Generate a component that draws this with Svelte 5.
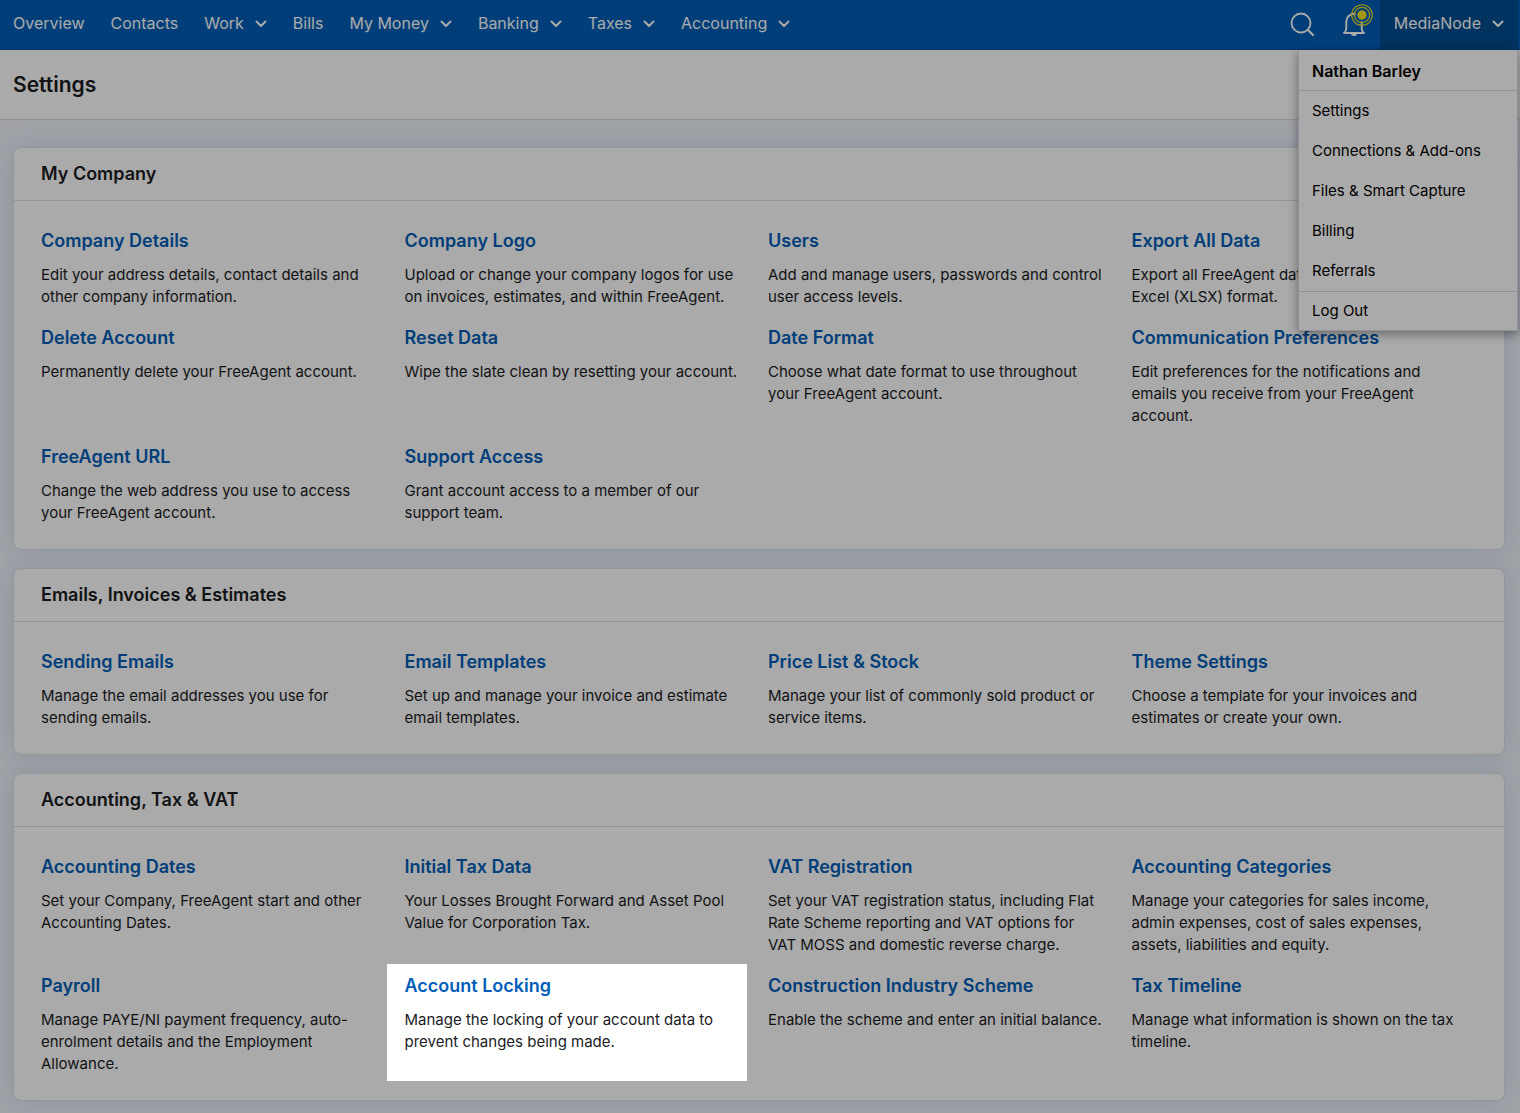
<script lang="ts">
	interface NavItem {
		label: string;
		menu?: boolean;
	}

	interface Setting {
		title: string;
		text: string;
		spotlight?: boolean;
	}

	interface Section {
		heading: string;
		items: Setting[];
	}

	const navItems: NavItem[] = [
		{ label: 'Overview' },
		{ label: 'Contacts' },
		{ label: 'Work', menu: true },
		{ label: 'Bills' },
		{ label: 'My Money', menu: true },
		{ label: 'Banking', menu: true },
		{ label: 'Taxes', menu: true },
		{ label: 'Accounting', menu: true }
	];

	const menuLinks = [
		'Settings',
		'Connections & Add-ons',
		'Files & Smart Capture',
		'Billing',
		'Referrals'
	];

	const sections: Section[] = [
		{
			heading: 'My Company',
			items: [
				{
					title: 'Company Details',
					text: 'Edit your address details, contact details and other company information.'
				},
				{
					title: 'Company Logo',
					text: 'Upload or change your company logos for use on invoices, estimates, and within FreeAgent.'
				},
				{
					title: 'Users',
					text: 'Add and manage users, passwords and control user access levels.'
				},
				{
					title: 'Export All Data',
					text: 'Export all FreeAgent data in\nExcel (XLSX) format.'
				},
				{ title: 'Delete Account', text: 'Permanently delete your FreeAgent account.' },
				{ title: 'Reset Data', text: 'Wipe the slate clean by resetting your account.' },
				{
					title: 'Date Format',
					text: 'Choose what date format to use throughout your FreeAgent account.'
				},
				{
					title: 'Communication Preferences',
					text: 'Edit preferences for the notifications and emails you receive from your FreeAgent account.'
				},
				{
					title: 'FreeAgent URL',
					text: 'Change the web address you use to access your FreeAgent account.'
				},
				{
					title: 'Support Access',
					text: 'Grant account access to a member of our support team.'
				}
			]
		},
		{
			heading: 'Emails, Invoices & Estimates',
			items: [
				{
					title: 'Sending Emails',
					text: 'Manage the email addresses you use for sending emails.'
				},
				{
					title: 'Email Templates',
					text: 'Set up and manage your invoice and estimate email templates.'
				},
				{
					title: 'Price List & Stock',
					text: 'Manage your list of commonly sold product or service items.'
				},
				{
					title: 'Theme Settings',
					text: 'Choose a template for your invoices and estimates or create your own.'
				}
			]
		},
		{
			heading: 'Accounting, Tax & VAT',
			items: [
				{
					title: 'Accounting Dates',
					text: 'Set your Company, FreeAgent start and other Accounting Dates.'
				},
				{
					title: 'Initial Tax Data',
					text: 'Your Losses Brought Forward and Asset Pool Value for Corporation Tax.'
				},
				{
					title: 'VAT Registration',
					text: 'Set your VAT registration status, including Flat Rate Scheme reporting and VAT options for VAT MOSS and domestic reverse charge.'
				},
				{
					title: 'Accounting Categories',
					text: 'Manage your categories for sales income, admin expenses, cost of sales expenses, assets, liabilities and equity.'
				},
				{
					title: 'Payroll',
					text: 'Manage PAYE/NI payment frequency, auto-enrolment details and the Employment Allowance.'
				},
				{
					title: 'Account Locking',
					text: 'Manage the locking of your account data to prevent changes being made.',
					spotlight: true
				},
				{
					title: 'Construction Industry Scheme',
					text: 'Enable the scheme and enter an initial balance.'
				},
				{
					title: 'Tax Timeline',
					text: 'Manage what information is shown on the tax timeline.'
				}
			]
		}
	];

	let menuOpen = $state(true);
</script>

{#snippet chevron()}
	<svg class="chevron" width="12" height="8" viewBox="0 0 12 8" fill="none" aria-hidden="true">
		<path
			d="M1.5 1.5 6 6l4.5-4.5"
			stroke="currentColor"
			stroke-width="2"
			stroke-linecap="round"
			stroke-linejoin="round"
		/>
	</svg>
{/snippet}

<header class="topbar">
	<nav aria-label="Main">
		{#each navItems as item}
			{#if item.menu}
				<button type="button" class="nav-item">{item.label}{@render chevron()}</button>
			{:else}
				<a class="nav-item" href="#top">{item.label}</a>
			{/if}
		{/each}
	</nav>

	<div class="tools">
		<button type="button" class="icon-btn" aria-label="Search">
			<svg width="26" height="26" viewBox="0 0 26 26" fill="none" stroke="currentColor">
				<circle cx="12" cy="12" r="9.5" stroke-width="1.8" />
				<path d="m19 19 5 5" stroke-width="2.2" stroke-linecap="round" />
			</svg>
		</button>
		<button type="button" class="icon-btn" aria-label="Notifications">
			<svg width="26" height="26" viewBox="0 0 26 26" fill="none" stroke="currentColor">
				<path
					d="M3 22h20c-1.6-1.200-2.300-2.400-2.300-4.500v-7a7.500 7.500 0 0 0-15.400 0v7c0 2.100-.7 3.300-2.300 4.500Z"
					stroke-width="1.9"
					stroke-linejoin="round"
				/>
				<path d="M10 22.500a3 2.500 0 0 0 6 0Z" fill="currentColor" stroke="none" />
			</svg>
			<svg class="pulse" width="22" height="22" viewBox="0 0 22 22" fill="none" stroke="#f2e21c">
				<circle cx="11" cy="11" r="6.500" fill="#005eb8" stroke="none" />
				<circle cx="11" cy="11" r="10.3" stroke-width="1.1" />
				<circle cx="11" cy="11" r="7.7" stroke-width="1.2" />
				<circle cx="11" cy="11" r="4.7" fill="#f2e21c" stroke="none" />
			</svg>
		</button>
		<div class="account">
			<button
				type="button"
				class="account-btn"
				aria-expanded={menuOpen}
				onclick={() => (menuOpen = !menuOpen)}
			>
				MediaNode{@render chevron()}
			</button>
			{#if menuOpen}
				<div class="menu">
					<strong>Nathan Barley</strong>
					<ul>
						{#each menuLinks as link}
							<li><a href="#top">{link}</a></li>
						{/each}
					</ul>
					<a href="#top">Log Out</a>
				</div>
			{/if}
		</div>
	</div>
</header>

<div class="title-bar">
	<h1>Settings</h1>
</div>

<main>
	{#each sections as section}
		<section>
			<h2>{section.heading}</h2>
			<div class="grid">
				{#each section.items as item}
					<article class:spotlight={item.spotlight}>
						<h3><a href="#top">{item.title}</a></h3>
						<p>{item.text}</p>
					</article>
				{/each}
			</div>
		</section>
	{/each}
</main>

<style>
	:global(body) {
		min-height: 100vh;
		margin: 0;
		background: #f0f4fb;
		color: #1a1c1e;
		font-family: Inter, 'Liberation Sans', sans-serif;
		font-size: 15px;
		line-height: 22px;
	}

	a {
		color: inherit;
		text-decoration: none;
	}

	button {
		margin: 0;
		border: 0;
		padding: 0;
		background: none;
		color: inherit;
		font: inherit;
		cursor: pointer;
	}

	h1,
	h2,
	h3,
	p,
	ul {
		margin: 0;
		padding: 0;
	}

	.topbar {
		display: flex;
		justify-content: space-between;
		height: 50px;
		padding-right: 2px;
		box-sizing: border-box;
		border-bottom: 1px solid #004c99;
		background: #005eb8;
		color: #fff;
		font-size: 16px;
	}

	nav {
		display: flex;
		align-items: center;
		gap: 26px;
		padding: 0 13px 4px;
	}

	.nav-item,
	.account-btn {
		display: flex;
		align-items: center;
		gap: 11px;
		white-space: nowrap;
	}

	.chevron {
		margin-top: 3px;
	}

	.tools {
		display: flex;
		align-items: stretch;
	}

	.icon-btn {
		position: relative;
		display: flex;
		align-items: center;
		width: 26px;
		margin-right: 26px;
		padding-bottom: 2px;
	}

	.icon-btn + .icon-btn {
		margin-right: 13px;
	}

	.pulse {
		position: absolute;
		top: 4px;
		right: -6px;
	}

	.account {
		position: relative;
		display: flex;
	}

	.account-btn {
		padding: 0 14px 4px;
		background: #004d8f;
	}

	.menu {
		position: absolute;
		top: 50px;
		right: 0;
		z-index: 10;
		width: 220px;
		border: 1px solid #d5dae4;
		border-top: 0;
		box-sizing: border-box;
		background: #fff;
		color: #000;
		font-size: 15px;
		box-shadow: 0 3px 10px rgba(0, 0, 0, 0.4);
	}

	.menu strong,
	.menu a {
		display: block;
		padding: 9px 13px;
	}

	.menu strong {
		padding-top: 10px;
		padding-bottom: 8px;
		font-size: 16px;
		font-weight: 600;
	}

	.menu ul {
		border-top: 1px solid #d5dae4;
		border-bottom: 1px solid #d5dae4;
		list-style: none;
	}

	.menu ul + a {
		padding: 8px 13px;
	}

	.title-bar {
		padding: 21px 13px 20px;
		border-bottom: 1px solid #d5dae4;
		background: #fff;
	}

	h1 {
		font-size: 21px;
		font-weight: 600;
		line-height: 28px;
	}

	main {
		display: flex;
		flex-direction: column;
		gap: 18px;
		padding: 27px 15px 12px 13px;
	}

	section {
		border: 1px solid #dde2ea;
		border-radius: 8px;
		background: #fff;
		box-shadow: 0 0 24px rgba(40, 70, 130, 0.12);
	}

	h2 {
		padding: 14px 27px;
		border-bottom: 1px solid #dbdee3;
		font-size: 18px;
		font-weight: 600;
		line-height: 24px;
	}

	.grid {
		display: grid;
		grid-template-columns: repeat(4, 1fr);
		gap: 18px;
		padding: 28px 27px 25px;
	}

	h3 {
		margin-bottom: 11px;
		color: #005eb8;
		font-size: 18px;
		font-weight: 600;
		line-height: 24px;
	}

	article {
		position: relative;
	}

	article p {
		padding-right: 9px;
		white-space: pre-line;
	}

	/* Dims everything on the page except the highlighted setting */
	.spotlight::before {
		content: '';
		position: absolute;
		inset: -10px 3px -6px -18px;
		z-index: 20;
		box-shadow: 0 0 0 200vmax rgba(0, 0, 0, 0.333);
		pointer-events: none;
	}
</style>
